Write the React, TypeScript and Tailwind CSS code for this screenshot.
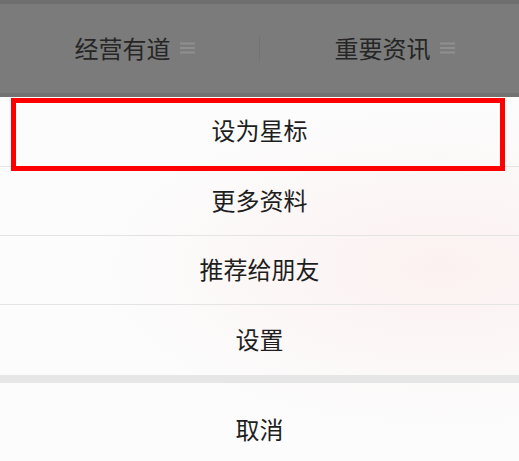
import React from "react";

const font = { fontFamily: '"Noto Sans CJK SC", "Noto Sans", sans-serif' };

function MenuIcon() {
  return (
    <svg width="15" height="12" viewBox="0 0 15 12" className="ml-[9px] mt-[1px]">
      <rect x="0" y="0.5" width="15" height="2" fill="#8f8f8f" />
      <rect x="0" y="5" width="15" height="2" fill="#8f8f8f" />
      <rect x="0" y="9.5" width="15" height="2" fill="#8f8f8f" />
    </svg>
  );
}

function Row({ label, h, border = true }: { label: string; h: string; border?: boolean }) {
  return (
    <div
      className={`flex items-center justify-center pb-[3px] text-[24px] text-[#1e1e1e] ${h} ${
        border ? "border-b border-[#e4e4e4]" : ""
      }`}
    >
      {label}
    </div>
  );
}

export default function App() {
  return (
    <div
      className="relative w-[519px] h-[461px] overflow-hidden bg-[#fcfcfc]"
      style={font}
    >
      <div className="flex h-[97px] items-center bg-[#7b7b7b] border-t-4 border-b-4 border-t-[#6f6f6f] border-b-[#727272]">
        <div className="flex flex-1 items-center justify-center pl-[10px] pb-[2px] text-[24px] text-[#262626]">
          <span>经营有道</span>
          <MenuIcon />
        </div>
        <div className="h-[25px] w-px bg-[#727272]" />
        <div className="flex flex-1 items-center justify-center pl-[10px] pb-[2px] text-[24px] text-[#262626]">
          <span>重要资讯</span>
          <MenuIcon />
        </div>
      </div>

      <div className="flex flex-col bg-[radial-gradient(ellipse_at_85%_45%,#fcf1f1_0%,#fcfcfc_55%)]">
        <Row label="设为星标" h="h-[70px]" />
        <Row label="更多资料" h="h-[69px]" />
        <Row label="推荐给朋友" h="h-[69px]" />
        <Row label="设置" h="h-[70px]" border={false} />
        <div className="h-[8px] bg-[#e6e6e6]" />
        <div className="flex h-[94px] items-center justify-center pb-[3px] text-[24px] text-[#1e1e1e]">
          取消
        </div>
      </div>

      <div className="absolute left-[11px] top-[98px] h-[73px] w-[494px] border-[5px] border-[#fe0000]" />
    </div>
  );
}
